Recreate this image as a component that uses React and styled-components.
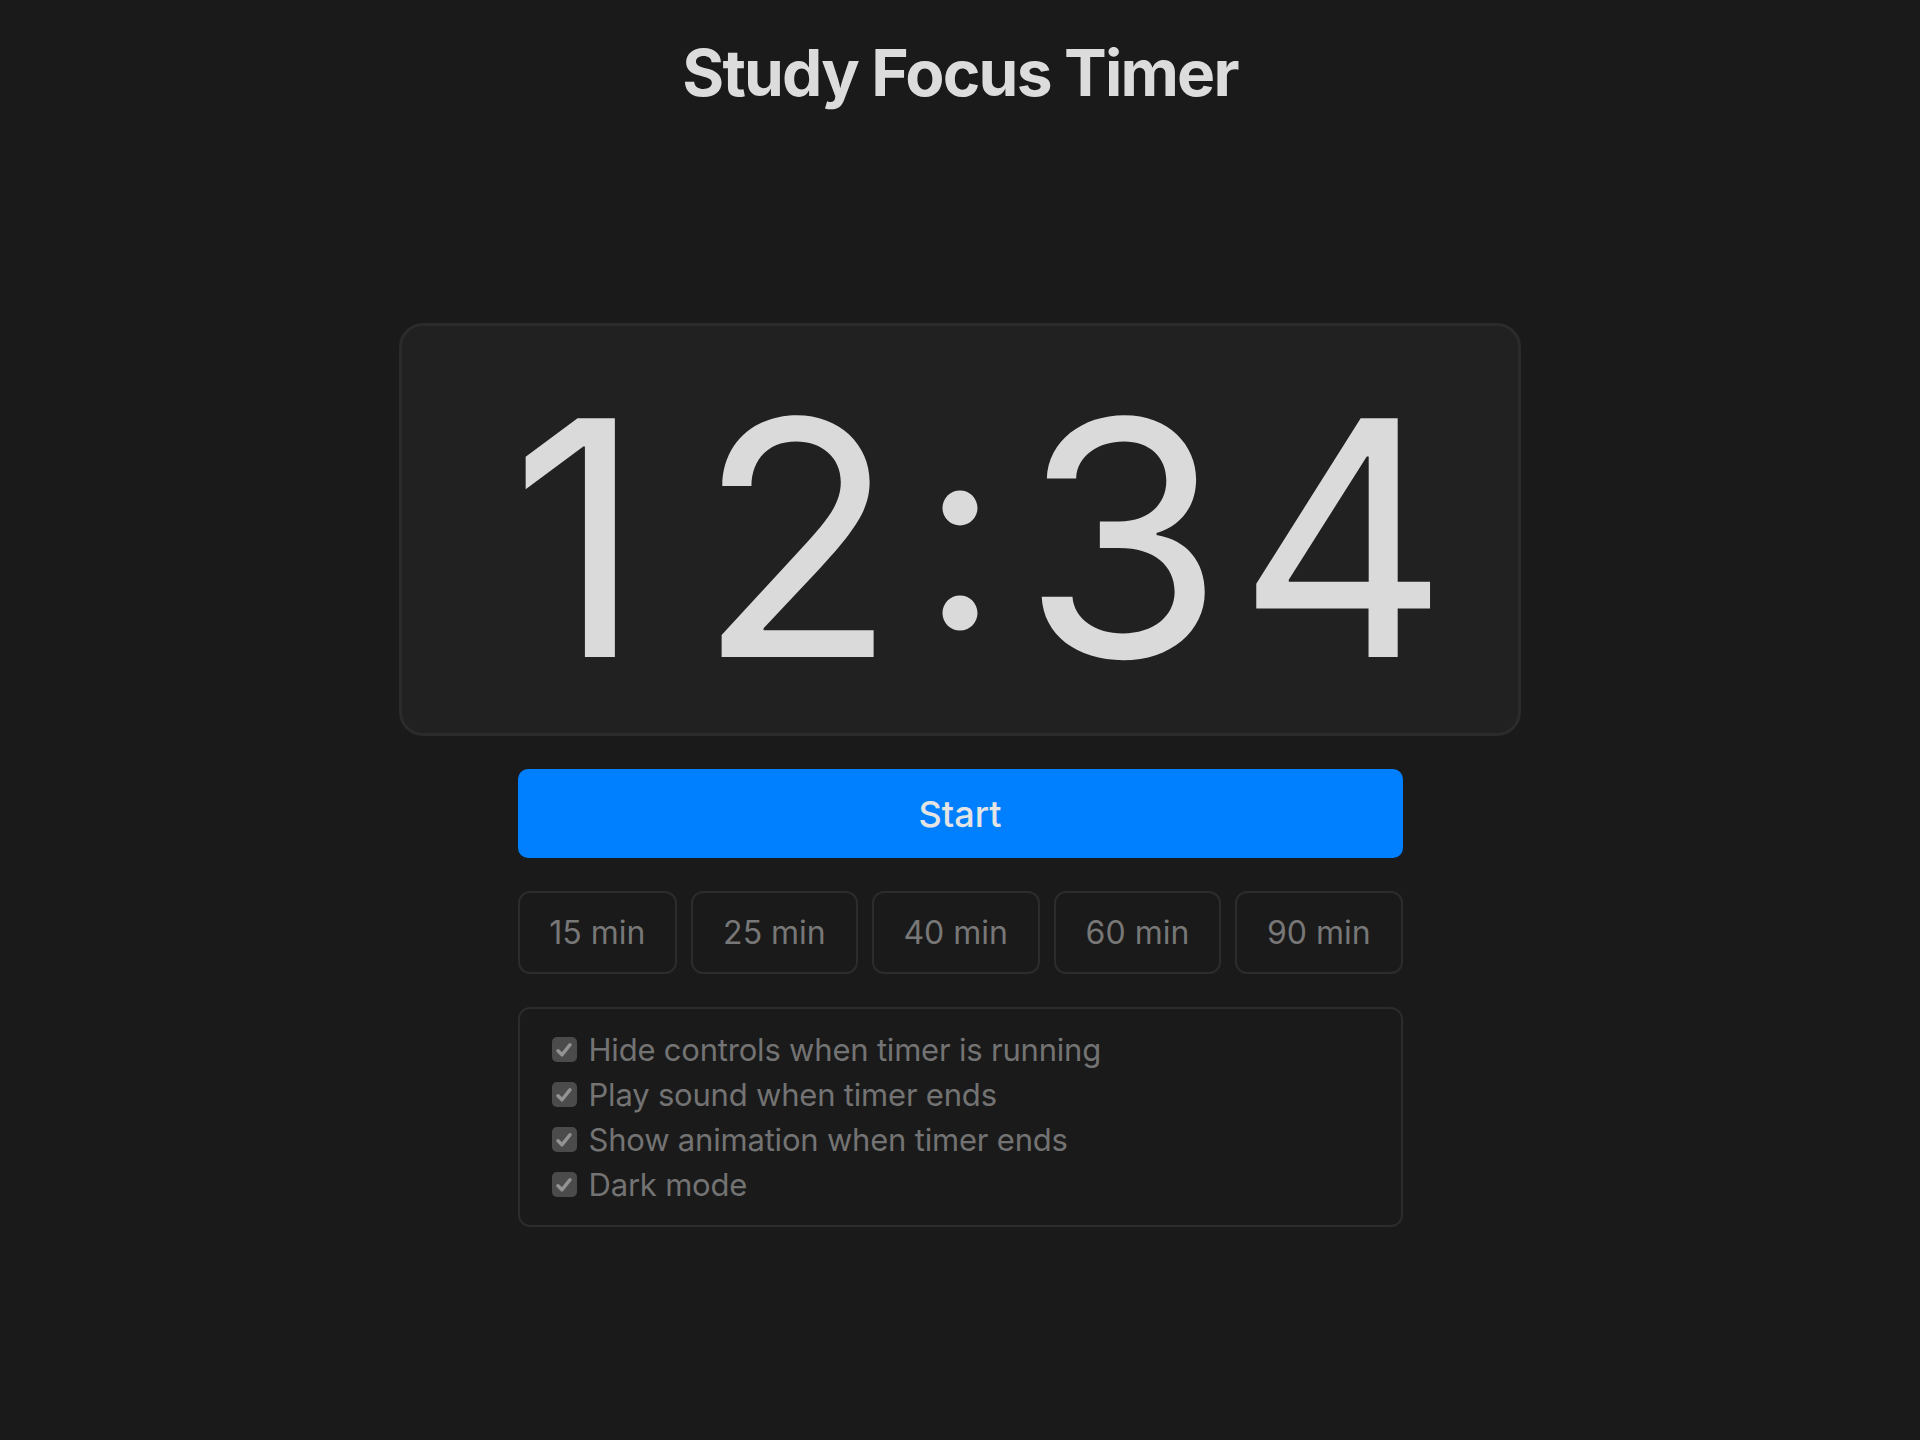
import React, { useState } from "react";
import styled, { createGlobalStyle } from "styled-components";

const Global = createGlobalStyle`
  html, body { margin: 0; padding: 0; background: #1a1a1a; }
  body { font-family: Inter, "Noto Sans", "Liberation Sans", sans-serif; color: #dcdcdc; }
  * { box-sizing: border-box; }
`;

const Page = styled.div`
  min-height: 1440px;
  display: flex;
  flex-direction: column;
  align-items: center;
  padding-top: 34px;
`;

const Title = styled.h1`
  margin: 0;
  font-size: 64px;
  font-weight: 700;
  line-height: 77px;
  color: #dcdcdc;
  letter-spacing: -1.8px;
`;

const Card = styled.div`
  margin-top: 212px;
  width: 1122px;
  height: 413px;
  background: #212121;
  border: 3px solid #2b2b2b;
  border-radius: 24px;
  display: flex;
  align-items: center;
  justify-content: center;
`;

const Digits = styled.div`
  display: flex;
  align-items: baseline;
  font-size: 328px;
  font-weight: 400;
  line-height: 1;
  color: #dadada;
  margin-top: 16px;
`;

const Cell = styled.span`
  display: inline-block;
  width: ${(p) => (p.$colon ? 106 : 220)}px;
  text-align: center;
  font-size: ${(p) => (p.$colon ? "0.81em" : "1em")};
  font-feature-settings: ${(p) => (p.$colon ? '"case" 1' : "normal")};
`;

const Controls = styled.div`
  width: 885px;
  display: flex;
  flex-direction: column;
  gap: 33px;
  margin-top: 33px;
`;

const StartButton = styled.button`
  height: 89px;
  border: none;
  border-radius: 10px;
  background: #0080ff;
  color: #e4e4e4;
  font-family: inherit;
  font-size: 36px;
  font-weight: 500;
  cursor: pointer;
`;

const Presets = styled.div`
  display: flex;
  gap: 14px;
`;

const Preset = styled.button`
  flex: 1 1 auto;
  height: 83px;
  background: #1a1a1a;
  border: 2px solid #2c2c2c;
  border-radius: 12px;
  color: #777;
  font-family: inherit;
  font-size: 32px;
  font-weight: 400;
`;

const Options = styled.div`
  border: 2px solid #2c2c2c;
  border-radius: 12px;
  padding: 18px 32px 18px 32px;
  display: flex;
  flex-direction: column;
`;

const Option = styled.label`
  display: flex;
  align-items: center;
  gap: 12px;
  height: 45px;
  font-size: 31px;
  letter-spacing: -0.2px;
  color: #737373;
`;

const Box = styled.span`
  width: 25px;
  height: 25px;
  border-radius: 5px;
  background: #4b4b4b;
  display: inline-flex;
  align-items: center;
  justify-content: center;
  flex: none;
`;

const Check = () => (
  <Box>
    <svg width="20" height="20" viewBox="0 0 16 16">
      <path d="M3.2 8.6 L6.4 11.8 L12.8 3.8" fill="none" stroke="#939393" strokeWidth="2.8" strokeLinecap="round" strokeLinejoin="round" />
    </svg>
  </Box>
);

const presets = ["15 min", "25 min", "40 min", "60 min", "90 min"];
const options = [
  "Hide controls when timer is running",
  "Play sound when timer ends",
  "Show animation when timer ends",
  "Dark mode",
];

export default function App() {
  const [time] = useState("12:34");
  return (
    <>
      <Global />
      <Page>
        <Title>Study Focus Timer</Title>
        <Card>
          <Digits>
            {time.split("").map((c, i) => (
              <Cell key={i} $colon={c === ":"}>
                {c}
              </Cell>
            ))}
          </Digits>
        </Card>
        <Controls>
          <StartButton>Start</StartButton>
          <Presets>
            {presets.map((p) => (
              <Preset key={p}>{p}</Preset>
            ))}
          </Presets>
          <Options>
            {options.map((o) => (
              <Option key={o}>
                <Check />
                {o}
              </Option>
            ))}
          </Options>
        </Controls>
      </Page>
    </>
  );
}
